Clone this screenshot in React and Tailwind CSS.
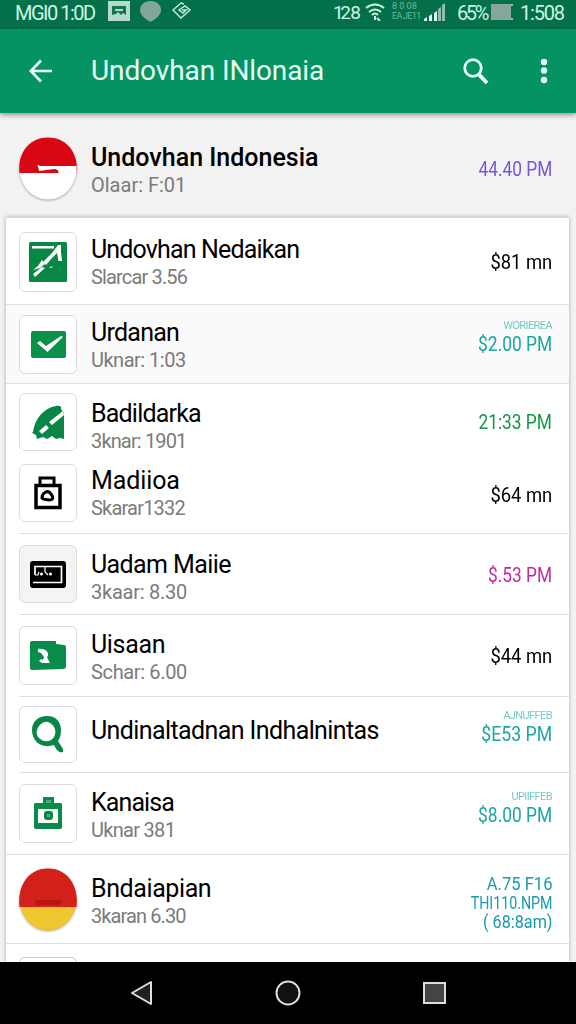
import React from 'react';
import clsx from 'clsx';

const ChartIcon = () => (
  <svg width="38" height="40" viewBox="0 0 38 40">
    <rect width="38" height="40" rx="1.5" fill="#078646" />
    <path d="M3 4h22v2.500H3zM29 3h3v7l1 9h-3.500l-1.500-8-5 5-6 7-3-3 9-9z" fill="#fff" />
    <path d="M13 18l3 4-5 4-7 2 5-4zM4 32l9-7 3 1L6 35zM20 25l4-.5-1.500 1.500z" fill="#fff" />
  </svg>
);

const CheckIcon = () => (
  <svg width="35" height="27" viewBox="0 0 35 27">
    <rect width="35" height="27" rx="2" fill="#0a9149" />
    <path d="M6 12l3-2 6 5L30 5l2 1-15.500 15z" fill="#fff" />
  </svg>
);

const LeafIcon = () => (
  <svg width="33" height="35" viewBox="0 0 33 35">
    <path d="M1 27C3 13 12 3 24 1c4-1 6 1 5 3l2 3 1 1v26l-4-1-4 1-4-3-5 3-4-2-6 2-1-4-4-2z" fill="#078646" />
    <path d="M31 6l1 4-12 10-3-3zM14 20l3 3-7 6-3-3z" fill="#fff" />
  </svg>
);

const BottleIcon = () => (
  <svg width="28" height="34" viewBox="0 0 28 34" fill="none" stroke="#000">
    <path d="M2 9.500h24v22H2z" strokeWidth="3.500" />
    <path d="M6 9V2h14v7" strokeWidth="3" />
    <path d="M8 22c0-5 6-9 9-4 3 4 2 6-2 6-3-1-6 0-7-2z" strokeWidth="3" />
  </svg>
);

const CardIcon = () => (
  <svg width="36" height="27" viewBox="0 0 36 27">
    <rect width="36" height="27" rx="3" fill="#000" />
    <path d="M5 14V5.500h26.500v16H3" fill="none" stroke="#fff" strokeWidth="1.700" />
    <path d="M5 14h3l1-3M15 6v5l3 3" fill="none" stroke="#fff" strokeWidth="1.200" />
    <circle cx="11.500" cy="13" r="1.500" fill="#fff" />
    <circle cx="20.500" cy="13" r="1.500" fill="#fff" />
  </svg>
);

const FolderIcon = () => (
  <svg width="36" height="29" viewBox="0 0 36 29">
    <path d="M2 0h24v3l8 1q2 0 2 2v19q0 3-3 3L2 29q-2 0-2-2V2q0-2 2-2z" fill="#078d49" />
    <path d="M8 8c6-1 11 2 10 7l-1 1 3 6h-8l-3-2 2-2 2 1 1-3-3-4-3-1z" fill="#fff" />
  </svg>
);

const SearchTileIcon = () => (
  <svg width="32" height="37" viewBox="0 0 32 37">
    <path d="M15 0c9 0 14 6 14 14 0 5-1 8-3 11l5 8v3c-4 1-6-1-9-7C10 33 0 26 0 14 0 6 6 0 15 0z" fill="#078646" />
    <path d="M5 14c2-6 7-9 11-8 7 3 9 9 6 15-4 6-11 5-15 1-2-2-3-5-2-8z" fill="#fff" />
  </svg>
);

const JarIcon = () => (
  <svg width="28" height="33" viewBox="0 0 28 33">
    <path d="M1 6h8V0h11v6h7l1 1v23q0 2-2 2H2q-2 0-2-2V7z" fill="#078d49" />
    <path d="M4 12h20v14H4z" fill="#fff" />
    <rect x="10" y="14" width="9" height="9" rx="3" fill="#078646" />
    <path d="M12 3h5v3h-5zM13 17h3v3h-3z" fill="#48ad78" />
  </svg>
);

const Flag = ({ top, bottom, children }) => (
  <svg width="58" height="64" viewBox="0 0 60 64" preserveAspectRatio="none" className="drop-shadow-[0_1px_1px_rgba(0,0,0,0.3)]">
    <ellipse cx="30" cy="31.500" rx="29.500" ry="31" fill={bottom} />
    <path d={`M.5 ${top.y}C-2 16 11 .5 30 .5S62 16 59.500 ${top.y}z`} fill={top.color} />
    {children}
  </svg>
);

const rows = [
  { title: 'Undovhan Nedaikan', track: 'tracking-[-0.85px]', sub: 'Slarcar 3.56', subTrack: 'tracking-[-0.85px]', icon: ChartIcon, amount: '$81 mn', scale: 'scale-x-[0.92]', height: 'h-[87px]', tile: 'mt-[14px] h-[60px]', text: 'pt-[18px]', right: 'pt-[31px]', line: 'full' },
  { title: 'Urdanan', track: 'tracking-[-0.75px]', sub: 'Uknar: 1:03', subTrack: 'tracking-[-0.5px]', icon: CheckIcon, label: 'WORIEREA', amount: '$2.00 PM', scale: 'scale-x-[0.87]', color: 'text-[#1aa79f]', height: 'h-[79px]', tile: 'mt-[10px] h-[59px]', text: 'pt-[14px]', right: 'pt-[15px]', line: 'full', bg: 'bg-[#fafafa]' },
  { title: 'Badildarka', track: 'tracking-[-0.8px]', sub: '3knar: 1901', subTrack: 'tracking-[-0.85px]', icon: LeafIcon, amount: '21:33 PM', scale: 'scale-x-[0.865]', color: 'text-[#159447]', height: 'h-[73px]', tile: 'mt-[9px] h-[58px]', text: 'pt-[16px]', right: 'pt-[25px]' },
  { title: 'Madiioa', track: 'tracking-[-0.1px]', sub: 'Skarar1332', subTrack: 'tracking-[-0.8px]', icon: BottleIcon, amount: '$64 mn', scale: 'scale-x-[0.92]', height: 'h-[77px]', tile: 'mt-[7px] h-[58px]', text: 'pt-[10px]', right: 'pt-[25px]', line: 'inset' },
  { title: 'Uadam Maiie', track: 'tracking-[-0.6px]', sub: '3kaar: 8.30', subTrack: 'tracking-[-0.25px]', icon: CardIcon, amount: '$.53 PM', scale: 'scale-x-[0.865]', color: 'text-[#c22a9b]', height: 'h-[81px]', tile: 'mt-[11px] h-[58px] bg-[#f4f4f4]', text: 'pt-[17px]', right: 'pt-[28px]', line: 'inset' },
  { title: 'Uisaan', track: 'tracking-[-0.35px]', sub: 'Schar: 6.00', subTrack: 'tracking-[-0.35px]', icon: FolderIcon, amount: '$44 mn', scale: 'scale-x-[0.92]', height: 'h-[82px]', tile: 'mt-[11px] h-[59px]', text: 'pt-[16px]', right: 'pt-[28px]', line: 'inset' },
  { title: 'Undinaltadnan Indhalnintas', track: 'tracking-[-0.6px]', icon: SearchTileIcon, label: 'AJNUFFEB', amount: '$E53 PM', scale: 'scale-x-[0.885]', color: 'text-[#1aa79f]', height: 'h-[76px]', tile: 'mt-[9px] h-[57px]', text: 'pt-[20px]', right: 'pt-[13px]', line: 'inset' },
  { title: 'Kanaisa', track: 'tracking-[-0.9px]', sub: 'Uknar 381', subTrack: 'tracking-[-0.7px]', icon: JarIcon, label: 'UPIIFFEB', amount: '$8.00 PM', scale: 'scale-x-[0.87]', color: 'text-[#1aa79f]', height: 'h-[82px]', tile: 'mt-[11px] h-[59px]', text: 'pt-[16px]', right: 'pt-[18px]', line: 'full' },
];

const Title = ({ children, className }) => (
  <div className={clsx('whitespace-nowrap text-[25px] leading-[28px] text-black', className)}>{children}</div>
);

const Sub = ({ children, className }) => (
  <div className={clsx('whitespace-nowrap text-[20px] leading-[26px] text-[#7b7b7b]', className)}>{children}</div>
);

const Row = ({ item }) => {
  const Icon = item.icon;
  return (
    <div className={clsx('flex flex-col', item.height, item.bg)}>
      <div className="flex min-h-0 flex-1 items-start pl-[13px] pr-[17px]">
        <div className={clsx('flex w-[58px] shrink-0 items-center justify-center rounded-[6px] border border-[#dcdcde]', !item.tile.includes('bg-') && 'bg-white', item.tile)}>
          <Icon />
        </div>
        <div className={clsx('ml-[14px] flex-1', item.text)}>
          <Title className={item.track}>{item.title}</Title>
          {item.sub && <Sub className={item.subTrack}>{item.sub}</Sub>}
        </div>
        <div className={clsx('shrink-0 whitespace-nowrap text-right', item.right, item.color || 'text-black')}>
          {item.label && <div className="h-[11px] text-[11px] leading-[12px] tracking-[-0.6px] opacity-60">{item.label}</div>}
          <div className={clsx('origin-right text-[20px] leading-[26px]', item.scale)}>{item.amount}</div>
        </div>
      </div>
      {item.line && <div className={clsx('h-px shrink-0 bg-[#dfdfe1]', item.line === 'inset' && 'ml-[13px]')} />}
    </div>
  );
};

const StatusBar = () => (
  <div className="flex h-[29px] items-start whitespace-nowrap bg-[#03704a] pl-[15px] text-[20px] leading-[26px] text-[#cdf5e4]">
    <span className="w-[93px] tracking-[-1.500px]">MGI0 1:0D</span>
    <svg className="mt-px shrink-0" width="22" height="20" viewBox="0 0 22 20">
      <rect width="22" height="20" fill="#b5dacb" />
      <path d="M4 5h14v9l-3-2-2 2-3-3-2 2-4 1z" fill="#12734f" />
      <path d="M7 8h8v2H7z" fill="#b5dacb" />
    </svg>
    <svg className="ml-[10px] mt-px shrink-0" width="21" height="21" viewBox="0 0 21 21">
      <path d="M10.500 0C17 0 21 4 21 9s-5 9-10.500 12C5 18 0 14 0 9s4-9 10.500-9z" fill="#82a698" />
    </svg>
    <svg className="ml-[11px] mt-[2px] shrink-0" width="19" height="17" viewBox="0 0 19 17" fill="none" stroke="#c3ebdb" strokeWidth="1.500">
      <path d="M12 2L9 1 1 8l8 8 9-8-5-4-6 4 4 3 3-3h-4" />
    </svg>
    <span className="ml-[142px] w-[32px] text-[19px] leading-[25px] tracking-[-4px]">
      <span className="tracking-[-3.500px]">12</span>
      <span className="ml-[3px]">8</span>
    </span>
    <svg className="mt-[3px] shrink-0" width="20" height="18" viewBox="0 0 20 18" fill="none" stroke="#cdf5e4" strokeWidth="2">
      <path d="M1 5q9-7 18 0M4 9q6-5 12 0M7 12q3-3 6 0" />
      <path d="M10 13v4M12 15l3 3" />
    </svg>
    <span className="ml-[7px] mt-[1px] w-[32px] text-[9px] leading-[10px] text-[#72b69a]">
      <span className="block">8 0 08</span>
      <span className="block tracking-[-0.7px]">EA JE11</span>
    </span>
    <svg className="mt-[3px] shrink-0" width="22" height="18" viewBox="0 0 22 18">
      <path d="M0 18v-2l3-2v4zM5 18v-5l3-2v7zM10 18v-8l3-2v10z" fill="#e3fff3" />
      <path d="M14 18V6l3-2v14zM18 18V2l3-2v18z" fill="#8fbfac" />
    </svg>
    <span className="ml-[11px] w-[34px] tracking-[-2.400px]">65%</span>
    <svg className="mt-[4px] shrink-0" width="23" height="16" viewBox="0 0 23 16">
      <rect width="20" height="16" fill="#83a899" />
      <path d="M20 1h2M20 15h2" stroke="#b5dacb" strokeWidth="1.500" />
    </svg>
    <span className="ml-[6px] tracking-[-1.200px]">1:508</span>
  </div>
);

const AppBar = () => (
  <div className="relative z-10 flex h-[84px] items-center bg-[#059362] pl-[29px] pr-[28px] text-[#e9fff5] shadow-[0_2px_5px_rgba(0,0,0,0.4)]">
    <svg width="24" height="24" viewBox="0 0 24 24" fill="none" stroke="currentColor" strokeWidth="2.700">
      <path d="M23 12H2M12 1.500L1.800 12 12 22.500" />
    </svg>
    <h1 className="ml-[38px] text-[28px] leading-[34px] tracking-[-0.1px]">Undovhan INlonaia</h1>
    <svg className="ml-auto" width="26" height="27" viewBox="0 0 26 27" fill="none" stroke="currentColor">
      <circle cx="10" cy="10" r="8.300" strokeWidth="2.800" />
      <path d="M15.500 16L24 25" strokeWidth="4" />
    </svg>
    <svg className="ml-[51px]" width="8" height="26" viewBox="0 0 8 26" fill="currentColor">
      <circle cx="4" cy="4" r="3.200" />
      <circle cx="4" cy="12.500" r="3.200" />
      <circle cx="4" cy="22" r="3.200" />
    </svg>
  </div>
);

const NavBar = () => (
  <div className="flex h-[62px] items-center bg-black pl-[130px]">
    <svg width="24" height="26" viewBox="0 0 24 26">
      <path d="M21 2v22L2 13z" fill="#202020" stroke="#dedede" strokeWidth="2" strokeLinejoin="round" />
    </svg>
    <svg className="ml-[121px]" width="26" height="26" viewBox="0 0 26 26">
      <circle cx="13" cy="13" r="11.500" fill="#111" stroke="#dedede" strokeWidth="2" />
    </svg>
    <svg className="ml-[122px]" width="23" height="22" viewBox="0 0 23 22">
      <rect x="1" y="1" width="21" height="20" fill="#444" stroke="#dedede" strokeWidth="2" />
    </svg>
  </div>
);

const App = () => (
  <div className="flex h-[1024px] w-[576px] flex-col overflow-hidden bg-[#f2f2f3] font-[Roboto,sans-serif]">
    <StatusBar />
    <AppBar />

    <div className="flex h-[104px] shrink-0 items-start pl-[19px] pr-[24px]">
      <div className="mt-[24px] shrink-0">
        <Flag top={{ y: 36, color: '#d70713' }} bottom="#fff">
          <path d="M19 28l4 1h36.500v7H38l-17-2z" fill="#fff" />
          <path d="M21 34l15-2q5 0 5 4H20z" fill="#d70713" />
        </Flag>
      </div>
      <div className="ml-[14px] flex-1 pt-[31px]">
        <Title className="font-medium">Undovhan Indonesia</Title>
        <Sub>Olaar: F:01</Sub>
      </div>
      <div className="origin-right scale-x-[0.865] pt-[43px] text-[20px] leading-[26px] text-[#7756d8]">44.40 PM</div>
    </div>

    <div className="ml-[6px] mr-[7px] min-h-0 flex-1 overflow-hidden border-t border-[#d9d9dc] bg-white shadow-[0_0_4px_rgba(0,0,0,0.3)]">
      {rows.map((item) => (
        <Row key={item.title} item={item} />
      ))}
      <div className="flex h-[89px] items-start border-b border-[#dfdfe1] pl-[13px] pr-[17px]">
        <div className="mt-[13px] shrink-0">
          <Flag top={{ y: 39, color: '#d3201a' }} bottom="#efc530">
            <path d="M17 22v7h25q3 0 2 5l-3 3H18l-1-4" fill="#b91513" />
            <path d="M17 22v7h25q3 0 2 3H18z" fill="#cf241d" />
          </Flag>
        </div>
        <div className="ml-[14px] flex-1 pt-[20px]">
          <Title className="tracking-[-0.4px]">Bndaiapian</Title>
          <Sub className="tracking-[-0.9px]">3karan 6.30</Sub>
        </div>
        <div className="pt-[19px] text-right text-[18px] leading-[19px] text-[#189bab]">
          <div className="origin-right scale-x-[0.92]">A.75 F16</div>
          <div className="origin-right scale-x-[0.79]">THI110.NPM</div>
          <div className="origin-right scale-x-[0.9]">( 68:8am)</div>
        </div>
      </div>
      <div className="ml-[13px] mt-[13px] h-[58px] w-[58px] rounded-[6px] border border-[#c9c9cb]" />
    </div>

    <NavBar />
  </div>
);

export default App;
